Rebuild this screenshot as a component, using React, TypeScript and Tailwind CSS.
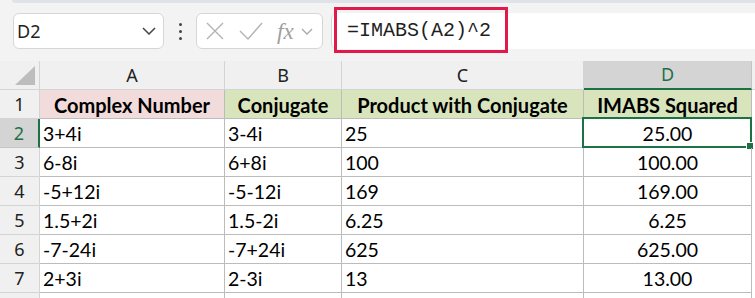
import React from 'react';

const rows = [
  ['3+4i', '3-4i', '25', '25.00'],
  ['6-8i', '6+8i', '100', '100.00'],
  ['-5+12i', '-5-12i', '169', '169.00'],
  ['1.5+2i', '1.5-2i', '6.25', '6.25'],
  ['-7-24i', '-7+24i', '625', '625.00'],
  ['2+3i', '2-3i', '13', '13.00'],
];

const cellFont = { fontFamily: 'Lato, "Open Sans", sans-serif' };
const uiFont = { fontFamily: '"Noto Sans", "Open Sans", sans-serif' };

function Toolbar() {
  return (
    <div className="h-[61px] bg-[#f3f3f3] flex flex-col">
      <div className="h-[3px] ml-[12px] bg-[#dfe3e8] rounded-bl-md" />
      <div className="mt-[10px] flex items-center h-[36px] pl-[13px]">
        {/* name box */}
        <div
          className="w-[151px] h-[36px] bg-white border border-[#d6d6d6] rounded-md flex items-center justify-between pl-[3px] pr-[7px]"
          style={uiFont}
        >
          <span className="text-[18px] text-[#1f1f1f]">D2</span>
          <svg width="14" height="8" viewBox="0 0 14 8" fill="none">
            <path d="M1 1l6 6 6-6" stroke="#444" strokeWidth="1.5" />
          </svg>
        </div>
        <div className="w-[32px] flex flex-col items-center gap-[4px]">
          <div className="w-[3px] h-[3px] bg-[#444] rounded-full" />
          <div className="w-[3px] h-[3px] bg-[#444] rounded-full" />
          <div className="w-[3px] h-[3px] bg-[#444] rounded-full" />
        </div>
        {/* fx box */}
        <div className="w-[127px] h-[36px] bg-white border border-[#d6d6d6] rounded-md flex items-center pl-[9px]">
          <svg width="18" height="18" viewBox="0 0 18 18" fill="none">
            <path d="M1 1l16 16M17 1L1 17" stroke="#b3b3b3" strokeWidth="1.4" />
          </svg>
          <svg className="ml-[15px]" width="24" height="18" viewBox="0 0 24 18" fill="none">
            <path d="M1 9l8 8L23 1" stroke="#b3b3b3" strokeWidth="1.4" />
          </svg>
          <span
            className="ml-[14px] text-[23px] italic text-[#a0a0a0] leading-none"
            style={{ fontFamily: '"Liberation Serif", "DejaVu Serif", serif' }}
          >
            fx
          </span>
          <svg className="ml-[7px]" width="12" height="7" viewBox="0 0 12 7" fill="none">
            <path d="M1 1l5 5 5-5" stroke="#a8a8a8" strokeWidth="1.3" />
          </svg>
        </div>
        <div className="w-[8px] self-stretch" />
        {/* formula field */}
        <div className="relative flex-1 h-[36px] bg-white rounded-l-md border-l border-[#d6d6d6] flex items-center pl-[15px]">
          <span
            className="text-[20px] text-[#1f1f1f]"
            style={{ fontFamily: '"Liberation Mono", "DejaVu Sans Mono", monospace' }}
          >
            =IMABS(A2)^2
          </span>
          <div className="absolute left-[2px] top-[-6px] w-[174px] h-[46px] border-[3px] border-[#e2194b]" />
        </div>
      </div>
    </div>
  );
}

function Corner() {
  return (
    <div className="bg-[#f0f0f0] border-r border-b border-[#d4d4d4] flex items-end justify-end pr-[4px] pb-[4px]">
      <svg width="20" height="19" viewBox="0 0 20 19">
        <polygon points="20,0 20,19 0,19" fill="#bdbdbd" />
      </svg>
    </div>
  );
}

export default function App() {
  const letters = ['A', 'B', 'C', 'D'];
  const headers = ['Complex Number', 'Conjugate', 'Product with Conjugate', 'IMABS Squared'];
  return (
    <div className="w-[755px] h-[298px] overflow-hidden bg-white">
      <Toolbar />
      <div className="grid grid-cols-[40px_185px_117px_242px_168px_3px] grid-rows-[29px_repeat(7,29px)_5px]">
        <Corner />
        {letters.map(l => (
          <div
            key={l}
            className={
              l === 'D'
                ? 'bg-[#d4d4d4] border-r border-[#c4c4c4] border-b-2 border-b-[#1e7145] flex items-center justify-center text-[18px] text-[#1e7145]'
                : 'bg-[#f0f0f0] border-r border-b border-[#d4d4d4] flex items-center justify-center text-[18px] text-[#222]'
            }
            style={uiFont}
          >
            {l}
          </div>
        ))}
        <div className="bg-[#f0f0f0] border-b border-[#d4d4d4]" />

        {/* row 1 */}
        <div className="bg-[#f0f0f0] border-r border-b border-[#d4d4d4] flex items-center justify-center text-[18px] text-[#222]" style={uiFont}>
          1
        </div>
        {headers.map((h, i) => (
          <div
            key={h}
            className={
              (i === 0 ? 'bg-[#f2dcdb]' : 'bg-[#d8e4bc]') +
              ' border-r border-b border-[#bcbcbc] flex items-center justify-center pt-[2px] text-[20px] font-bold text-black'
            }
            style={cellFont}
          >
            {h}
          </div>
        ))}
        <div />

        {rows.map((r, i) => {
          const n = i + 2;
          const selected = n === 2;
          return (
            <React.Fragment key={n}>
              <div
                className={
                  selected
                    ? 'bg-[#d4d4d4] border-b border-[#c4c4c4] border-r-2 border-r-[#1e7145] flex items-center justify-center text-[18px] text-[#1e7145]'
                    : 'bg-[#f0f0f0] border-r border-b border-[#d4d4d4] flex items-center justify-center text-[18px] text-[#222]'
                }
                style={uiFont}
              >
                {n}
              </div>
              {r.slice(0, 3).map((v, j) => (
                <div
                  key={j}
                  className="border-r border-b border-[#bcbcbc] flex items-center pl-[3px] pt-[2px] text-[19.5px] text-black"
                  style={cellFont}
                >
                  {v}
                </div>
              ))}
              <div
                className="relative border-r border-b border-[#bcbcbc] flex items-center justify-center pt-[2px] text-[19.5px] text-black"
                style={cellFont}
              >
                {r[3]}
                {selected && (
                  <div className="absolute -left-[2px] -top-[2px] -right-[1px] -bottom-[1px] border-2 border-[#1e7145]">
                    <div className="absolute -right-[4px] -bottom-[4px] w-[8px] h-[8px] bg-[#1e7145] border border-white" />
                  </div>
                )}
              </div>
              <div />
            </React.Fragment>
          );
        })}
        <div className="bg-[#f0f0f0] border-r border-[#d4d4d4]" />
        <div className="border-r border-[#bcbcbc]" />
        <div className="border-r border-[#bcbcbc]" />
        <div className="border-r border-[#bcbcbc]" />
        <div className="border-r border-[#bcbcbc]" />
        <div />
      </div>
    </div>
  );
}
